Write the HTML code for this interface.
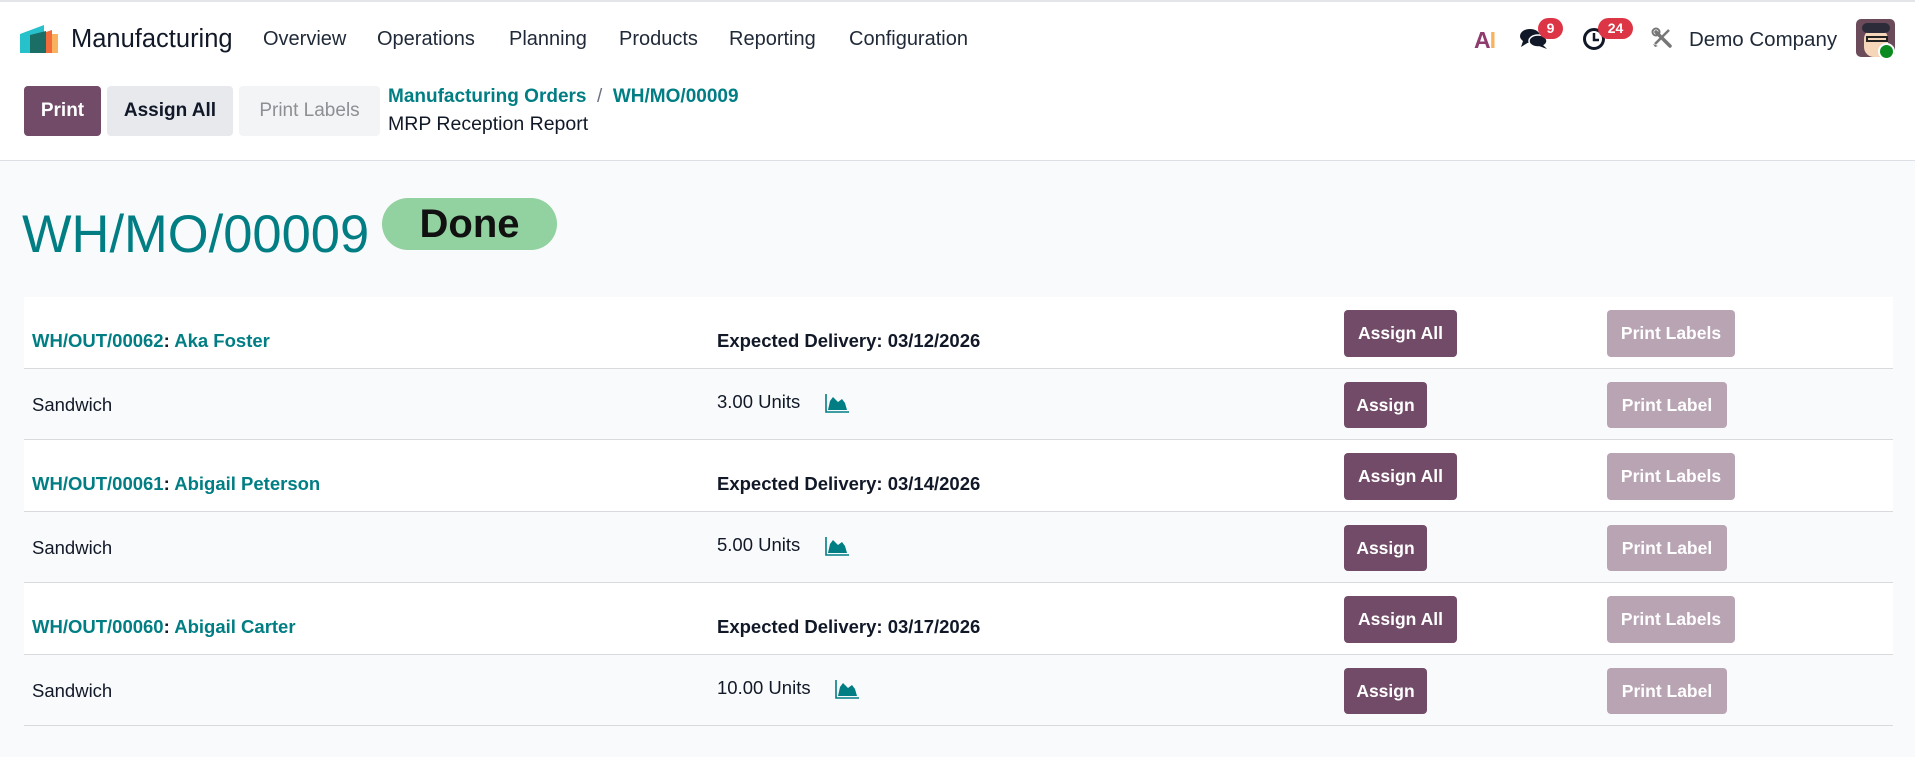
<!DOCTYPE html>
<html><head><meta charset="utf-8"><style>
*{box-sizing:border-box;margin:0;padding:0}
body{width:1915px;height:757px;overflow:hidden;background:#f9fafb;font-family:"Liberation Sans",sans-serif;color:#111827;position:relative}
.abs{position:absolute;white-space:nowrap}
#hdr{position:absolute;left:0;top:0;width:1915px;height:161px;background:#fff;border-top:2px solid #e3e5e8;border-bottom:1px solid #dcdfe3}
.menu{font-size:20px;top:28px;color:#1f2937}
.btn{position:absolute;border-radius:4px;font-weight:bold;display:flex;align-items:center;justify-content:center;font-size:19px}
.tl{color:#017e84;font-weight:bold;font-size:18.5px}
.bd{font-weight:bold;font-size:18.5px}
.rt{font-size:18.5px}
.pb{background:#714b67;color:#fff;font-size:17.5px}
.lb{background:#b9a4b4;color:#fff;font-size:17.5px}
.line{position:absolute;left:24px;width:1869px;height:1px;background:#d8dadd}
</style></head><body>
<div id="hdr"></div>
<svg class="abs" style="left:19px;top:22px" width="42" height="34" viewBox="0 0 42 34">
<path d="M1 12 L25 3 L25 31 L1 31Z" fill="#27c1cc"/>
<path d="M11 13 L27 9 L27 31 L11 31Z" fill="#1b6e66"/>
<path d="M27 10 L33 8 L33 31 L27 31Z" fill="#f26b3a"/>
<path d="M33 12 L39 12 L39 31 L33 31Z" fill="#fbb25f"/>
</svg>
<div class="abs" style="left:71px;top:25px;font-size:25.5px;color:#111827">Manufacturing</div>
<div class="abs menu" style="left:263px">Overview</div>
<div class="abs menu" style="left:377px">Operations</div>
<div class="abs menu" style="left:509px">Planning</div>
<div class="abs menu" style="left:619px">Products</div>
<div class="abs menu" style="left:729px">Reporting</div>
<div class="abs menu" style="left:849px">Configuration</div>

<div class="abs" style="left:1474px;top:27px;font-size:23px;font-weight:bold;letter-spacing:-1px"><span style="color:#8e3b6e">A</span><span style="color:#fbb25f">I</span></div>
<svg class="abs" style="left:1519px;top:27px" width="30" height="23" viewBox="0 0 30 23"><ellipse cx="11" cy="9" rx="10" ry="7" fill="#111827"/><path d="M4 14 L2 20 L10 15Z" fill="#111827"/><ellipse cx="19" cy="14" rx="9" ry="6" fill="#111827" stroke="#fff" stroke-width="1.5"/><path d="M24 18 L28 22 L20 19Z" fill="#111827"/></svg>
<div class="abs" style="left:1538px;top:18px;width:25px;height:21px;border-radius:11px;background:#dc3545;color:#fff;font-size:14px;font-weight:bold;text-align:center;line-height:21px">9</div>
<svg class="abs" style="left:1582px;top:27px" width="24" height="24" viewBox="0 0 24 24"><circle cx="12" cy="12" r="9.5" fill="none" stroke="#111827" stroke-width="3"/><path d="M12 6 V13 H17" fill="none" stroke="#111827" stroke-width="2.5"/></svg>
<div class="abs" style="left:1598px;top:18px;width:35px;height:21px;border-radius:11px;background:#dc3545;color:#fff;font-size:14px;font-weight:bold;text-align:center;line-height:21px">24</div>
<svg class="abs" style="left:1651px;top:27px" width="22" height="22" viewBox="0 0 22 22"><path d="M5 5 L19 19" stroke="#777" stroke-width="3.5" stroke-linecap="round"/><path d="M18 3 L4 17" stroke="#777" stroke-width="2.5"/><circle cx="5" cy="5" r="3.5" fill="none" stroke="#777" stroke-width="2"/><path d="M2 17 L4 20 L7 19Z" fill="#777"/></svg>
<div class="abs" style="left:1689px;top:28px;font-size:20.5px;color:#1f2937">Demo Company</div>
<div class="abs" style="left:1856px;top:19px;width:39px;height:38px;border-radius:5px;background:#6b4a5a;overflow:hidden">
<div style="position:absolute;left:8px;top:10px;width:24px;height:28px;border-radius:10px;background:#f5d6b8"></div>
<div style="position:absolute;left:6px;top:4px;width:28px;height:10px;border-radius:6px;background:#2b2b3a"></div>
<div style="position:absolute;left:10px;top:17px;width:22px;height:6px;border:2px solid #222"></div>
</div>
<div class="abs" style="left:1878px;top:43px;width:17px;height:17px;border-radius:50%;background:#0a8a1f;border:2px solid #fff"></div>

<div class="btn" style="left:24px;top:86px;width:77px;height:50px;background:#714b67;color:#fff">Print</div>
<div class="btn" style="left:107px;top:86px;width:126px;height:50px;background:#e7e9ed;color:#111827">Assign All</div>
<div class="btn" style="left:239px;top:86px;width:141px;height:50px;background:#f3f4f6;color:#8e8f93;font-weight:normal">Print Labels</div>
<div class="abs" style="left:388px;top:86px;font-size:19px;font-weight:bold;color:#017e84">Manufacturing Orders <span style="color:#6b7280;font-weight:normal">&nbsp;/&nbsp;</span> WH/MO/00009</div>
<div class="abs" style="left:388px;top:113px;font-size:19.5px;color:#111827">MRP Reception Report</div>

<div class="abs" style="left:22px;top:204px;font-size:52.5px;color:#017e84">WH/MO/00009</div>
<div class="abs" style="left:382px;top:198px;width:175px;height:52px;border-radius:26px;background:#92d1a0;text-align:center;font-size:40px;font-weight:bold;line-height:52px;color:#111">Done</div>

<div class="abs" style="left:24px;top:297px;width:1869px;height:72px;background:#fff"></div>
<div class="abs" style="left:24px;top:440px;width:1869px;height:72px;background:#fff"></div>
<div class="abs" style="left:24px;top:583px;width:1869px;height:72px;background:#fff"></div>
<div class="line" style="top:368px"></div><div class="line" style="top:439px"></div>
<div class="line" style="top:511px"></div><div class="line" style="top:582px"></div>
<div class="line" style="top:654px"></div><div class="line" style="top:725px"></div>

<div class="abs tl" style="left:32px;top:330px">WH/OUT/00062<span style="color:#111827">:</span> Aka Foster</div>
<div class="abs bd" style="left:717px;top:330px">Expected Delivery: 03/12/2026</div>
<div class="btn pb" style="left:1344px;top:310px;width:113px;height:47px">Assign All</div>
<div class="btn lb" style="left:1607px;top:310px;width:128px;height:47px">Print Labels</div>
<div class="abs rt" style="left:32px;top:394px">Sandwich</div>
<div class="abs rt" style="left:717px;top:391px">3.00 Units</div>
<svg class="abs" style="left:825px;top:393px" width="25" height="20" viewBox="0 0 25 20"><path d="M1 1 V19 H24" fill="none" stroke="#017e84" stroke-width="1.6"/><path d="M3 17 L5 8 L8 4 L13 9 L17 6 L20 10 L22 17Z" fill="#017e84"/></svg>
<div class="btn pb" style="left:1344px;top:382px;width:83px;height:46px">Assign</div>
<div class="btn lb" style="left:1607px;top:382px;width:120px;height:46px">Print Label</div>

<div class="abs tl" style="left:32px;top:473px">WH/OUT/00061<span style="color:#111827">:</span> Abigail Peterson</div>
<div class="abs bd" style="left:717px;top:473px">Expected Delivery: 03/14/2026</div>
<div class="btn pb" style="left:1344px;top:453px;width:113px;height:47px">Assign All</div>
<div class="btn lb" style="left:1607px;top:453px;width:128px;height:47px">Print Labels</div>
<div class="abs rt" style="left:32px;top:537px">Sandwich</div>
<div class="abs rt" style="left:717px;top:534px">5.00 Units</div>
<svg class="abs" style="left:825px;top:536px" width="25" height="20" viewBox="0 0 25 20"><path d="M1 1 V19 H24" fill="none" stroke="#017e84" stroke-width="1.6"/><path d="M3 17 L5 8 L8 4 L13 9 L17 6 L20 10 L22 17Z" fill="#017e84"/></svg>
<div class="btn pb" style="left:1344px;top:525px;width:83px;height:46px">Assign</div>
<div class="btn lb" style="left:1607px;top:525px;width:120px;height:46px">Print Label</div>

<div class="abs tl" style="left:32px;top:616px">WH/OUT/00060<span style="color:#111827">:</span> Abigail Carter</div>
<div class="abs bd" style="left:717px;top:616px">Expected Delivery: 03/17/2026</div>
<div class="btn pb" style="left:1344px;top:596px;width:113px;height:47px">Assign All</div>
<div class="btn lb" style="left:1607px;top:596px;width:128px;height:47px">Print Labels</div>
<div class="abs rt" style="left:32px;top:680px">Sandwich</div>
<div class="abs rt" style="left:717px;top:677px">10.00 Units</div>
<svg class="abs" style="left:835px;top:679px" width="25" height="20" viewBox="0 0 25 20"><path d="M1 1 V19 H24" fill="none" stroke="#017e84" stroke-width="1.6"/><path d="M3 17 L5 8 L8 4 L13 9 L17 6 L20 10 L22 17Z" fill="#017e84"/></svg>
<div class="btn pb" style="left:1344px;top:668px;width:83px;height:46px">Assign</div>
<div class="btn lb" style="left:1607px;top:668px;width:120px;height:46px">Print Label</div>
</body></html>
